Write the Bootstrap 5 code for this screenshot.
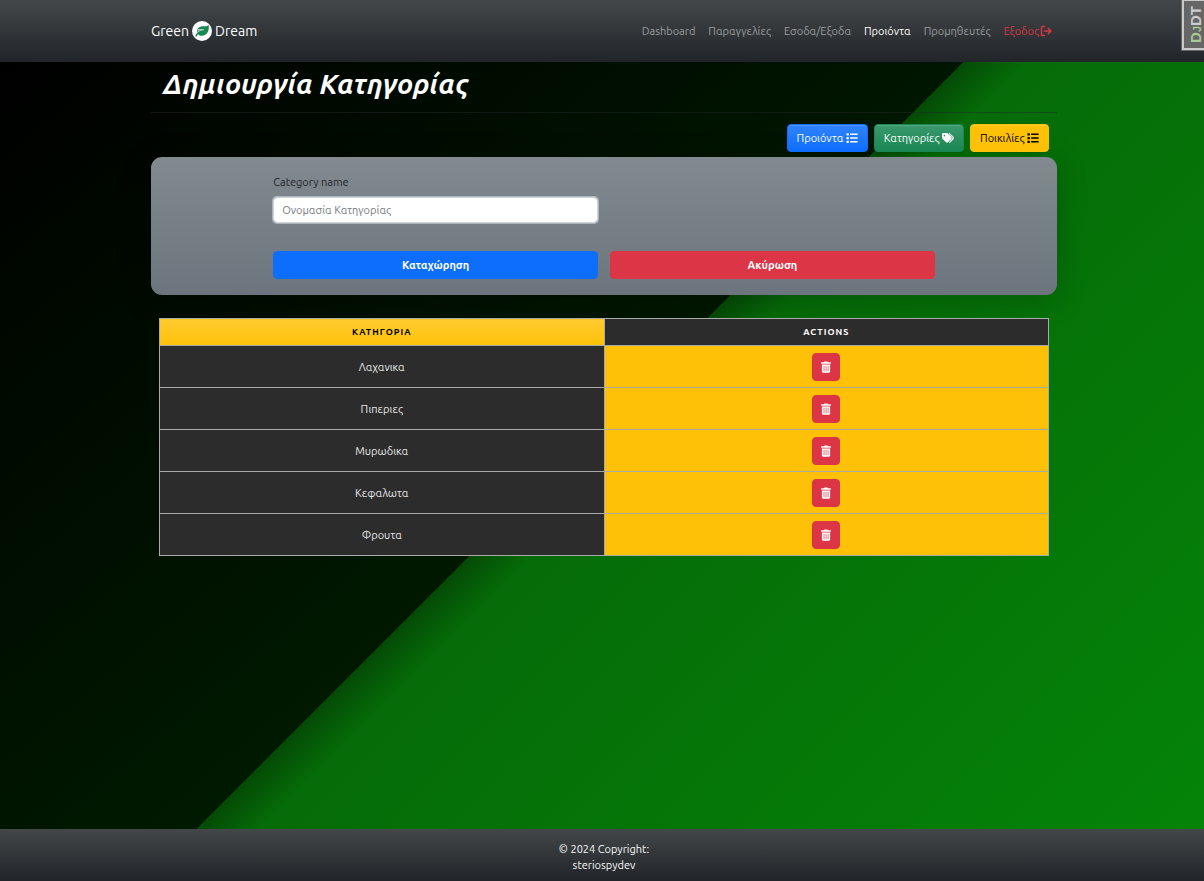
<!DOCTYPE html>
<html lang="el">
<head>
<meta charset="utf-8">
<meta name="viewport" content="width=device-width, initial-scale=1">
<title>Green Dream</title>
<link rel="stylesheet" href="https://cdn.jsdelivr.net/npm/bootstrap@5.3.0/dist/css/bootstrap.min.css">
<style>
  html { font-size: 11px; }
  body {
    font-family: Ubuntu, "Noto Sans", sans-serif;
    font-size: 11px;
    line-height: 16px;
    background:
      linear-gradient(135deg, rgba(0,0,0,.8) 49.2%, rgba(0,0,0,.3) 49.2%, rgba(0,0,0,0) 52.2%),
      linear-gradient(135deg, transparent 49.2%, #066a08 49.2%, #048508 100%),
      linear-gradient(140deg, #000 4%, #00ff00 100%);
    background-attachment: fixed;
  }
  .page-wrap { max-width: 922px; padding: 0 6px 0 10px; }
  .bar-shade { background: linear-gradient(180deg, #434749, #212529); }
  .topbar { min-height: 62px; padding: 0; --bs-navbar-color: #9b9d9f; --bs-navbar-active-color: #fff; }
  .topbar .page-wrap { padding: 0 6px 0 10px; }
  .navbar-brand { font-size: 14px; line-height: 20px; gap: 3px; margin: 0; padding: 0; }
  .topbar .navbar-nav { gap: 1px; }
  .topbar .navbar-nav .nav-link { padding: 6px; white-space: nowrap; }
  .topbar .navbar-nav .link-exit { color: #dc3545; padding-right: 5px; }
  .link-exit .glyph { margin-left: 1px; }
  .page-title { font-size: 28px; line-height: 34px; padding: 5px 12px 11px; margin: 0; }
  .title-rule { margin: 0 0 11px; border-color: #212529; opacity: .5; }
  .tool-btns { gap: 6px; padding: 0 8px 5px; }
  .btn { font-size: 11px; line-height: 16px; padding: 5px 9px; border-radius: 4px; }
  .tool-btns .btn { box-shadow: inset 0 1px 0 rgba(255,255,255,.15), 0 1px 1px rgba(0,0,0,.08); }
  .glyph { width: 12px; height: 12px; vertical-align: -2px; }
  .panel {
    background: linear-gradient(180deg, #828a90, #6c757d);
    border-radius: 11px; padding: 17px 0 16px;
    box-shadow: 0 6px 32px rgba(0,0,0,.2);
    margin-bottom: 23px;
  }
  .panel-col { padding: 0 9px; }
  .panel .row { --bs-gutter-x: 12px; }
  .form-label { margin-bottom: 7px; color: #212529; display: block; }
  .form-control { font-size: 11px; line-height: 16px; padding: 4px 8px; border: 1px solid #ced4da; border-radius: 4px; box-shadow: 0 0 0 1px #adb5bd; min-height: 26px; margin-bottom: 28px; }
  .form-control::placeholder { color: #757b82; }
  .table-pad { padding: 0 8px; }
  .cat-table { width: 100%; table-layout: fixed; border-collapse: collapse; text-align: center; color: #e8e8e8; }
  .cat-table th, .cat-table td { border: 1px solid #aaa; }
  .cat-table th { height: 27px; font-size: 9px; letter-spacing: 1px; text-transform: uppercase; background: #2c2c2c; color: #fff; }
  .cat-table th:first-child { background: linear-gradient(180deg, #ffcb31, #ffc107); color: #000; }
  .cat-table td { height: 42px; background: #2c2c2c; }
  .cat-table td:last-child { background: #ffc107; }
  .cat-table .btn { padding: 5px 7px; width: 28px; height: 28px; }
  .foot { min-height: 52px; color: #f8f9fa; padding: 12px 0 8px 4px; }
  .debug-tab {
    position: fixed; top: 0; right: 0; z-index: 1040; width: 22px; height: 50px;
    background: #666; border: 2px solid #c9c9c9; border-right: 0; border-top-width: 1px; outline: 1px solid #666;
    display: flex; align-items: center; justify-content: flex-end; text-decoration: none;
    color: #ccc; font: bold 15px/16px "Liberation Sans", sans-serif;
  }
  .debug-tab span { writing-mode: vertical-rl; rotate: 180deg; font-variant: small-caps; }
  .debug-tab b { color: #a6cc92; }
</style>
</head>
<body class="d-flex flex-column min-vh-100">
<svg class="d-none" aria-hidden="true">
  <symbol id="i-list" viewBox="0 0 16 16"><path fill="currentColor" d="M5.5 2h10v2h-10zM5.5 7h10v2h-10zM5.5 12h10v2h-10zM.7 1.5h3v3h-3zM.7 6.5h3v3h-3zM.7 11.500h3v3h-3z"/></symbol>
  <symbol id="i-tags" viewBox="0 0 17 16"><path fill="currentColor" fill-rule="evenodd" d="M0 2.500A1.500 1.500 0 0 1 1.500 1h5.300q.8 0 1.400.6l5 5a2 2 0 0 1 0 2.800l-4.700 4.700a2 2 0 0 1-2.800 0l-5-5Q0 8.500 0 7.700zM3.500 5.700a1.200 1.200 0 1 0 0-2.400 1.200 1.200 0 0 0 0 2.400z"/><path fill="none" stroke="currentColor" stroke-width="1.700" stroke-linecap="round" d="M10.500 1.800l4.800 4.800a2 2 0 0 1 0 2.800l-4.400 4.700"/></symbol>
  <symbol id="i-exit" viewBox="0 0 16 16"><path fill="none" stroke="currentColor" stroke-width="2" stroke-linecap="round" stroke-linejoin="round" d="M6 2H3.500Q2 2 2 3.500v9Q2 14 3.500 14H6M6 8h8.500M11 4.500L14.500 8 11 11.500"/></symbol>
  <symbol id="i-trash" viewBox="0 0 16 16"><path fill="currentColor" fill-rule="evenodd" d="M6 .5h4l.7 1H14.500v2h-13v-2h3.800zM2.500 4.500h11V14q0 1.500-1.500 1.500h-8Q2.500 15.500 2.500 14zM4.900 6.300v7.200h.9V6.300zm2.700 0v7.200h.9V6.300zm2.700 0v7.200h.9V6.300z"/></symbol>
</svg>

<nav class="navbar navbar-expand navbar-dark bar-shade topbar">
  <div class="container page-wrap">
    <a class="navbar-brand d-flex align-items-center" href="#">Green
      <svg width="20" height="20" viewBox="0 0 20 20" aria-hidden="true"><circle cx="10" cy="10" r="10" fill="#fff"/><path fill="#198754" d="M16.500 4c-1 1.300-2.500 1.300-5 1.300-3.700 0-6.300 1.700-6.300 5l.1.900C6.700 9.500 8.800 8.500 12 8.500c-4.200.8-7.300 2.700-8.700 6.800l1.200.5c.5-1.200 1-1.900 1.700-2.500 1 1.300 2.500 1.600 4 1.500 4.500-.2 7.700-5.300 6.300-10.800z"/><path d="M6 8.800h6" stroke="#fff" stroke-width=".8"/></svg>
      Dream</a>
    <ul class="navbar-nav ms-auto">
      <li class="nav-item"><a class="nav-link" href="#">Dashboard</a></li>
      <li class="nav-item"><a class="nav-link" href="#">Παραγγελίες</a></li>
      <li class="nav-item"><a class="nav-link" href="#">Εσοδα/Εξοδα</a></li>
      <li class="nav-item"><a class="nav-link active" aria-current="page" href="#">Προιόντα</a></li>
      <li class="nav-item"><a class="nav-link" href="#">Προμηθευτές</a></li>
      <li class="nav-item"><a class="nav-link link-exit" href="#">Εξοδος<svg class="glyph" aria-hidden="true"><use href="#i-exit"/></svg></a></li>
    </ul>
  </div>
</nav>

<a class="debug-tab" href="#"><span><b>Dj</b>DT</span></a>

<main class="container page-wrap flex-grow-1">
  <h1 class="page-title fw-bold fst-italic text-white">Δημιουργία Κατηγορίας</h1>
  <hr class="title-rule">
  <div class="d-flex justify-content-end tool-btns">
    <button type="button" class="btn btn-primary bg-gradient">Προιόντα <svg class="glyph" aria-hidden="true"><use href="#i-list"/></svg></button>
    <button type="button" class="btn btn-success bg-gradient">Κατηγορίες <svg class="glyph" aria-hidden="true"><use href="#i-tags"/></svg></button>
    <button type="button" class="btn btn-warning">Ποικιλίες <svg class="glyph" aria-hidden="true"><use href="#i-list"/></svg></button>
  </div>

  <form class="panel">
    <div class="col-9 mx-auto panel-col">
      <div class="row">
        <div class="col-6">
          <label class="form-label" for="category">Category name</label>
          <input class="form-control" id="category" type="text" placeholder="Ονομασία Κατηγορίας">
        </div>
      </div>
      <div class="row">
        <div class="col-6"><button type="submit" class="btn btn-primary w-100 fw-bold">Καταχώρηση</button></div>
        <div class="col-6"><button type="reset" class="btn btn-danger w-100 fw-bold">Ακύρωση</button></div>
      </div>
    </div>
  </form>

  <div class="table-pad">
    <table class="cat-table">
      <thead><tr><th scope="col">Κατηγορια</th><th scope="col">Actions</th></tr></thead>
      <tbody>
        <tr><td>Λαχανικα</td><td><button type="button" class="btn btn-danger" aria-label="Διαγραφή"><svg class="glyph" aria-hidden="true"><use href="#i-trash"/></svg></button></td></tr>
        <tr><td>Πιπεριες</td><td><button type="button" class="btn btn-danger" aria-label="Διαγραφή"><svg class="glyph" aria-hidden="true"><use href="#i-trash"/></svg></button></td></tr>
        <tr><td>Μυρωδικα</td><td><button type="button" class="btn btn-danger" aria-label="Διαγραφή"><svg class="glyph" aria-hidden="true"><use href="#i-trash"/></svg></button></td></tr>
        <tr><td>Κεφαλωτα</td><td><button type="button" class="btn btn-danger" aria-label="Διαγραφή"><svg class="glyph" aria-hidden="true"><use href="#i-trash"/></svg></button></td></tr>
        <tr><td>Φρουτα</td><td><button type="button" class="btn btn-danger" aria-label="Διαγραφή"><svg class="glyph" aria-hidden="true"><use href="#i-trash"/></svg></button></td></tr>
      </tbody>
    </table>
  </div>
</main>

<footer class="bar-shade foot text-center">
  <div>© 2024 Copyright:</div>
  <a class="text-reset text-decoration-none" href="#">steriospydev</a>
</footer>
<script src="https://cdn.jsdelivr.net/npm/bootstrap@5.3.0/dist/js/bootstrap.bundle.min.js"></script>
</body>
</html>
